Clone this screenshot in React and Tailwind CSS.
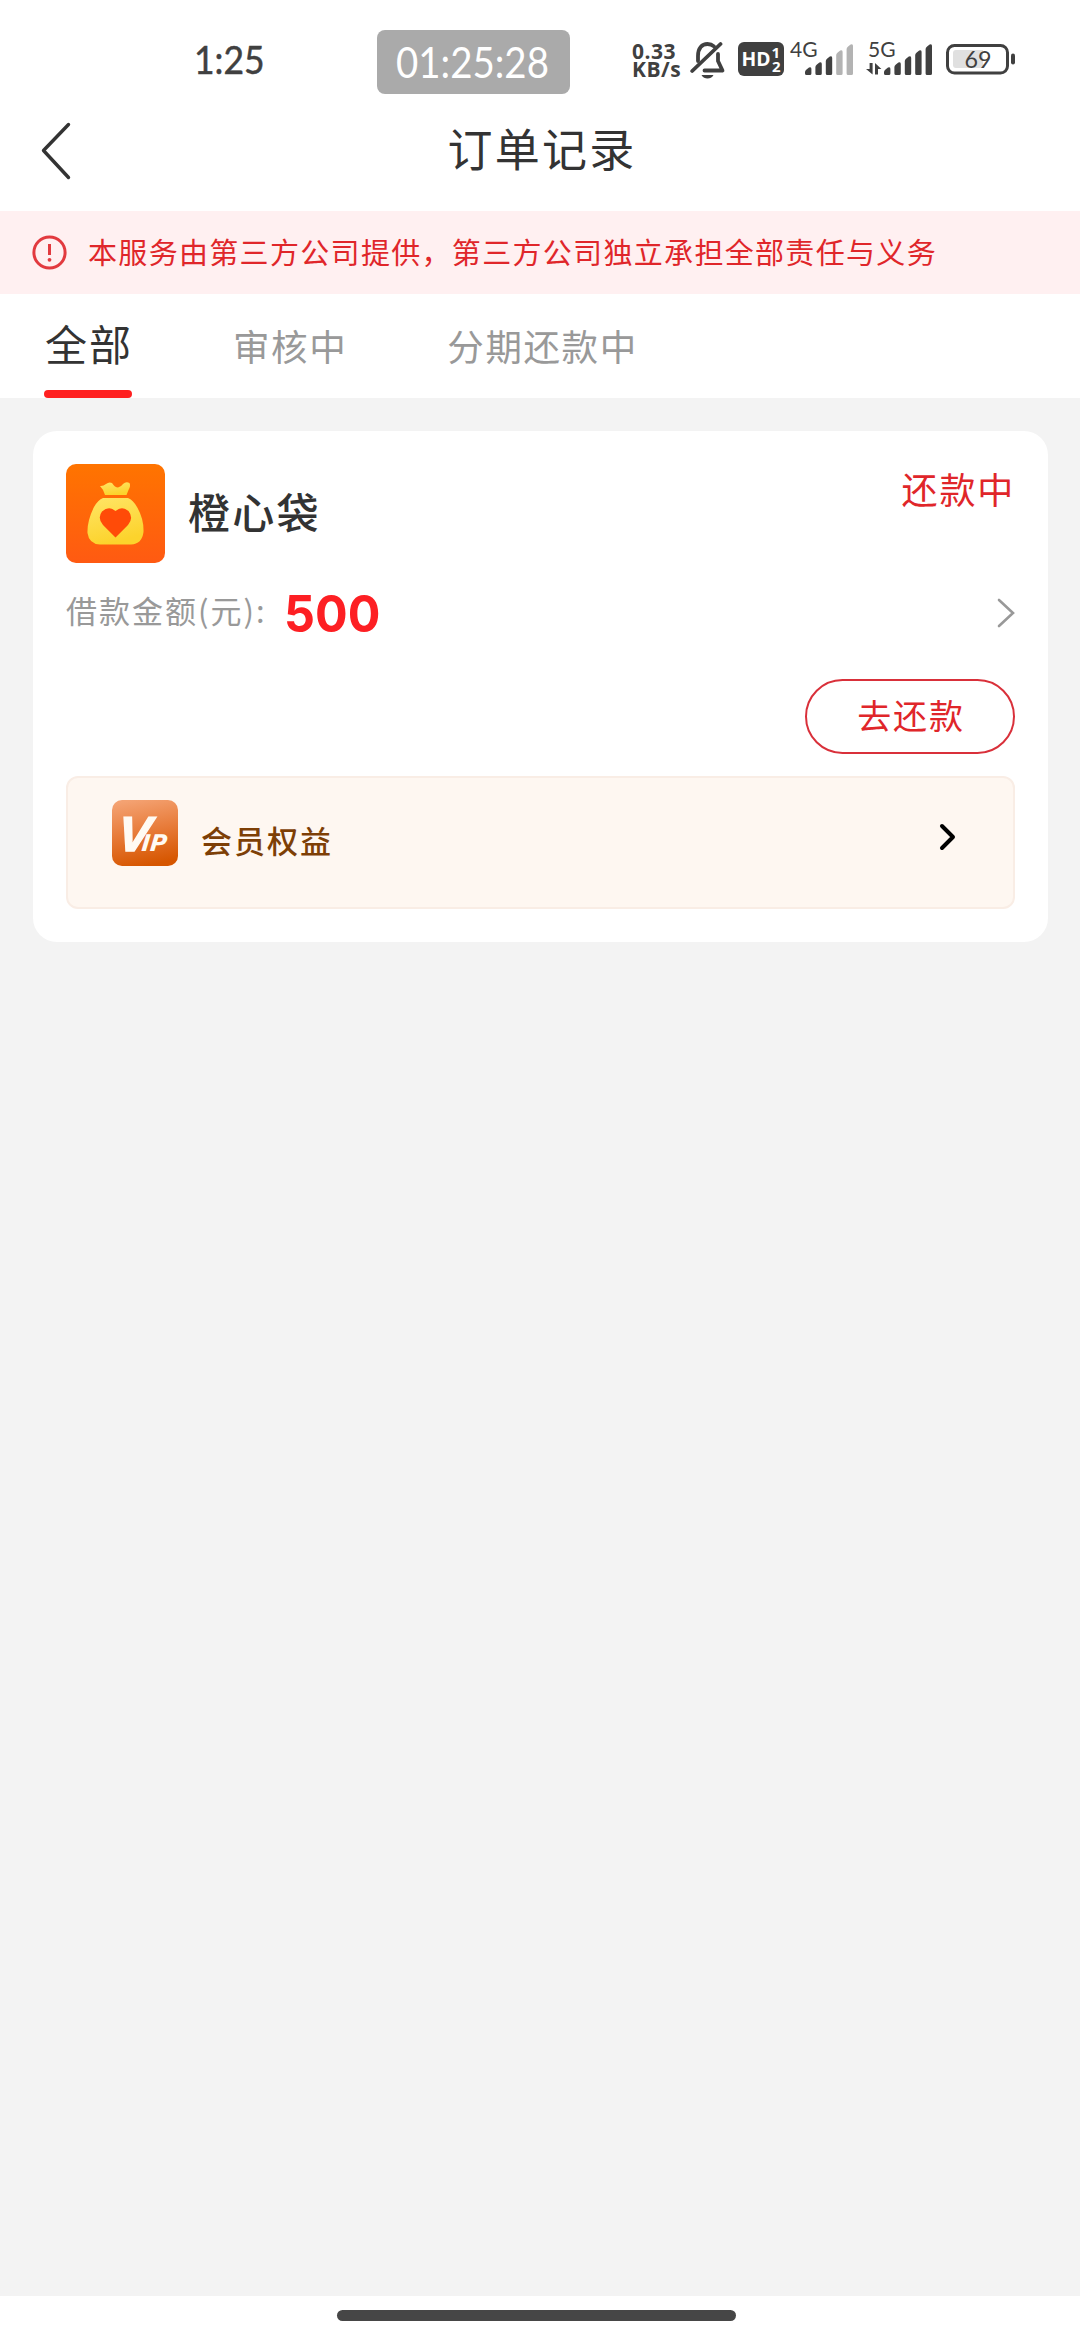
import React, { useState } from "react";

const tabs = ["全部", "审核中", "分期还款中"];

const orders = [
  {
    name: "橙心袋",
    status: "还款中",
    amount: 500,
    action: "去还款",
    benefit: "会员权益",
  },
];

const SignalBars = ({ active }) => {
  const bars = [8, 13, 19, 25, 31];
  return (
    <svg width="49" height="32" viewBox="0 0 49 32">
      {bars.map((h, i) => {
        const x = i * 10.4;
        const top = 32 - h;
        return (
          <path
            key={h}
            d={`M${x} ${top + 5} Q${x} ${top + 3.5} ${x + 1.5} ${top + 2.5} L${x + 4} ${top + 0.6} Q${x + 6.4} ${top - 0.6} ${x + 6.4} ${top + 2} V30.5 Q${x + 6.4} 32 ${x + 4.9} 32 H${x + 1.5} Q${x} 32 ${x} 30.5 Z`}
            fill={i < active ? "#404040" : "#b3b3b3"}
          />
        );
      })}
    </svg>
  );
};

const MutedBell = () => (
  <svg width="36" height="38" viewBox="0 0 36 38" fill="none" stroke="#404040" strokeLinecap="round" strokeLinejoin="round">
    <path d="M8 20 V15 C8 7 12 3 17.5 3 C20 3 22.2 3.8 24 5.4" strokeWidth="3.8" />
    <path d="M28 13 V20 L32.5 29.5 H14.5" strokeWidth="3.8" />
    <path d="M30.5 3 L2.2 30" strokeWidth="3.8" />
    <path d="M11.5 34 H23.5 C22 36.6 20 37.4 17.5 37.4 C15 37.4 13 36.6 11.5 34 Z" fill="#404040" stroke="none" />
  </svg>
);

const HdBadge = () => (
  <svg width="46" height="34" viewBox="0 0 46 34" className="font-['Open_Sans','Noto_Sans',sans-serif]">
    <rect width="46" height="34" rx="6" fill="#404040" />
    <text x="3.5" y="24" fontSize="20" fontWeight="700" fill="#fff" textLength="29" lengthAdjust="spacingAndGlyphs">HD</text>
    <text fontSize="15" fontWeight="700" fill="#fff">
      <tspan x="33.5" y="16">1</tspan>
      <tspan x="34" y="30">2</tspan>
    </text>
  </svg>
);

const DataArrows = () => (
  <svg width="16" height="12" viewBox="0 0 16 12" fill="#404040">
    <path d="M3.6 0 H6.6 V11.5 L0 6 H3.6 Z" />
    <path d="M9 0 L15.4 6 H12 V11.5 H9 Z" />
  </svg>
);

const Battery = () => (
  <svg width="70" height="31" viewBox="0 0 70 31" className="font-['Lato',sans-serif]">
    <rect x="1.5" y="1.5" width="60" height="27.5" rx="7" fill="none" stroke="#404040" strokeWidth="3" />
    <path d="M10 6 H37 V24 H10 Q7 24 7 21 V9 Q7 6 10 6 Z" fill="#e0e0e0" />
    <text x="18.5" y="24" fontSize="24" fill="#404040" textLength="27" lengthAdjust="spacingAndGlyphs">69</text>
    <rect x="65" y="9.5" width="4" height="11" rx="2" fill="#404040" />
  </svg>
);

const StatusBar = () => (
  <div className="flex h-[112px] items-start pl-[194px] text-[#404040]">
    <div className="mt-[31px] w-[183px] font-['Lato',sans-serif] text-[39px] leading-[56px] [-webkit-text-stroke:0.5px_#404040]">
      <span className="inline-block origin-left scale-x-[0.91]">1:25</span>
    </div>
    <div className="mt-[30px] flex h-[64px] w-[193px] items-center rounded-[8px] bg-[#aaaaaa] pl-[19px] font-['Lato',sans-serif] text-[42px] leading-[64px] text-white">
      <span className="inline-block origin-left whitespace-nowrap scale-x-[0.915]">01:25:28</span>
    </div>
    <p className="mt-[42px] ml-[62px] w-[58px] font-['Open_Sans',sans-serif] text-[21px] leading-[18px] font-bold tracking-[0.5px] whitespace-nowrap">
      0.33
      <br />
      KB/s
    </p>
    <div className="mt-[41px] w-[48px]">
      <MutedBell />
    </div>
    <div className="mt-[42px] w-[52px]">
      <HdBadge />
    </div>
    <div className="relative mt-[43px] w-[76px] pl-[15px]">
      <SignalBars active={3} />
      <span className="absolute -top-[4px] left-0 font-['Lato',sans-serif] text-[21px] leading-[20px]">4G</span>
    </div>
    <div className="relative mt-[43px] w-[80px] pl-[18px]">
      <SignalBars active={5} />
      <span className="absolute -top-[4px] left-[2px] font-['Lato',sans-serif] text-[21px] leading-[20px]">5G</span>
      <div className="absolute top-[20px] left-0">
        <DataArrows />
      </div>
    </div>
    <div className="mt-[44px]">
      <Battery />
    </div>
  </div>
);

const Header = () => (
  <div className="flex h-[99px] items-start px-[40px]">
    <button type="button" className="mt-[10px] w-[100px]">
      <svg width="32" height="58" viewBox="0 0 32 58" fill="none">
        <path d="M28.5 2.5 L3.5 28.5 L28.5 55.5" stroke="#333" strokeWidth="3.4" strokeLinecap="round" strokeLinejoin="round" />
      </svg>
    </button>
    <h1 className="mt-[6px] flex-1 pl-[4px] text-center text-[45px] leading-[60px] tracking-[2.3px] text-[#333]">订单记录</h1>
    <div className="w-[100px]" />
  </div>
);

const Notice = () => (
  <div className="flex h-[83px] items-center bg-[#fff0f1] pl-[32px] text-[#e0262a]">
    <svg width="35" height="35" viewBox="0 0 35 35" fill="none">
      <circle cx="17.5" cy="17.5" r="15.6" stroke="#e23a3f" strokeWidth="3" />
      <path d="M17.5 9 V20" stroke="#e23a3f" strokeWidth="3" />
      <circle cx="17.5" cy="24.8" r="1.9" fill="#e23a3f" />
    </svg>
    <p className="ml-[21px] pb-[4px] text-[29px] leading-[40px] tracking-[1.32px] whitespace-nowrap">
      本服务由第三方公司提供，第三方公司独立承担全部责任与义务
    </p>
  </div>
);

const BagLogo = () => (
  <svg width="99" height="99" viewBox="0 0 99 99">
    <defs>
      <linearGradient id="bagBg" x1="0" y1="0" x2="0" y2="1">
        <stop offset="0" stopColor="#ff7400" />
        <stop offset="1" stopColor="#ff5a12" />
      </linearGradient>
      <linearGradient id="bagFill" x1="0" y1="0" x2="0.3" y2="1">
        <stop offset="0" stopColor="#ffe566" />
        <stop offset="1" stopColor="#fcd32c" />
      </linearGradient>
    </defs>
    <rect width="99" height="99" rx="10" fill="url(#bagBg)" />
    <path d="M34 22 Q37 22.5 40 20 Q43 17.5 46 19 Q49 23.5 52 23.5 Q55 23 57 20 Q60 17 63.5 19 Q65 22 62.5 26 L60.5 31 H39 Q38 26 34 22 Z" fill="url(#bagFill)" />
    <path d="M37 34 H62 Q67 36 71 43 Q78 55 77.5 68 Q76 80 65 80.5 H34 Q23 80 21.5 69 Q21 57 28 43 Q32 36 37 34 Z" fill="url(#bagFill)" />
    <path d="M49.5 73.5 L37 61 Q31 54 36 47.5 Q43 41.5 49.5 47 Q56 41.5 62.5 47 Q68 54 62 61 Z" fill="#ff4b08" />
  </svg>
);

const VipLogo = () => (
  <svg width="66" height="66" viewBox="0 0 66 66">
    <defs>
      <linearGradient id="vipBg" x1="0.3" y1="0" x2="0.5" y2="1">
        <stop offset="0" stopColor="#f4a272" />
        <stop offset="0.5" stopColor="#e77a38" />
        <stop offset="1" stopColor="#d65600" />
      </linearGradient>
    </defs>
    <rect width="66" height="66" rx="10" fill="url(#vipBg)" />
    <text
      transform="translate(0 50.5) skewX(-6)"
      fill="#fffaf3"
      className="font-['DejaVu_Sans',sans-serif] font-bold italic"
    >
      <tspan x="4.5" y="0" fontSize="49" stroke="#fffaf3" strokeWidth="1.4" className="font-['Liberation_Sans',sans-serif]">V</tspan>
      <tspan x="29" y="0" fontSize="23">I</tspan>
      <tspan x="37.5" y="0" fontSize="23">P</tspan>
    </text>
  </svg>
);

const OrderCard = ({ order }) => (
  <div className="mt-[33px] mr-[32px] ml-[33px] h-[511px] rounded-[24px] bg-white px-[33px] pt-[33px]">
    <div className="flex h-[99px] items-start">
      <BagLogo />
      <div className="ml-[23px] flex-1 text-[42px] leading-[93px] font-medium tracking-[2.2px] text-[#333]">
        {order.name}
      </div>
      <div className="text-[36px] leading-[48px] tracking-[1.8px] text-[#e0262a]">{order.status}</div>
    </div>
    <div className="mt-[20px] flex h-[60px] items-center">
      <span className="pb-[5px] text-[31px] tracking-[2px] whitespace-nowrap text-[#999]">借款金额(元):</span>
      <span className="ml-[17px] flex-1 pt-[2px] font-['Inter',sans-serif] text-[51px] leading-[60px] font-bold text-[#fd1f23]">
        <span className="inline-block origin-left scale-x-[0.95]">{order.amount}</span>
      </span>
      <svg width="18" height="30" viewBox="0 0 18 30" fill="none">
        <path d="M2 2 L16 15 L2 28" stroke="#999" strokeWidth="2.6" strokeLinecap="round" />
      </svg>
    </div>
    <div className="mt-[36px] flex justify-end">
      <button
        type="button"
        className="h-[75px] w-[210px] rounded-full border-2 border-[#d9303a] pl-[2px] text-[34px] leading-[67px] tracking-[1.8px] text-[#e0262a]"
      >
        <span className="block h-[71px]">{order.action}</span>
      </button>
    </div>
    <div className="mt-[22px] flex h-[133px] items-start rounded-[12px] border-2 border-[#f9ede5] bg-[#fef7f1] pl-[44px]">
      <div className="mt-[22px]">
        <VipLogo />
      </div>
      <div className="mt-[39px] ml-[23px] flex-1 text-[31px] leading-[46px] font-medium tracking-[2px] text-[#7d3f06]">
        {order.benefit}
      </div>
      <svg className="mt-[45px] mr-[56px]" width="18" height="28" viewBox="0 0 18 28" fill="none">
        <path d="M3 3 L14 14 L3 25" stroke="#000" strokeWidth="4" strokeLinecap="round" strokeLinejoin="round" />
      </svg>
    </div>
  </div>
);

const App = () => {
  const [active, setActive] = useState(0);

  return (
    <div className="flex h-[2340px] w-[1080px] flex-col overflow-hidden bg-white font-['Noto_Sans_CJK_SC',sans-serif]">
      <StatusBar />
      <Header />
      <Notice />
      <div className="flex h-[104px] items-start pl-[44px]">
        {tabs.map((tab, i) => (
          <button
            type="button"
            key={tab}
            onClick={() => setActive(i)}
            className={
              i === active
                ? "mr-[101px] flex h-[104px] w-[88px] flex-col items-center pt-[19px] text-[42px] leading-[60px] tracking-[2px] whitespace-nowrap text-[#333]"
                : "mr-[100px] h-[104px] text-[36.5px] leading-[102px] tracking-[1.6px] whitespace-nowrap text-[#999]"
            }
          >
            <span className={i === active ? "pl-[2px]" : ""}>{tab}</span>
            {i === active && <span className="mt-[17px] h-[8px] w-[88px] rounded-full bg-[#ff2020]" />}
          </button>
        ))}
      </div>
      <div className="flex-1 overflow-hidden bg-[#f3f3f3]">
        {orders.map((order) => (
          <OrderCard key={order.name} order={order} />
        ))}
      </div>
      <div className="flex h-[44px] bg-white pt-[14px] pl-[337px]">
        <div className="h-[11px] w-[399px] rounded-full bg-[#464646]" />
      </div>
    </div>
  );
};

export default App;
